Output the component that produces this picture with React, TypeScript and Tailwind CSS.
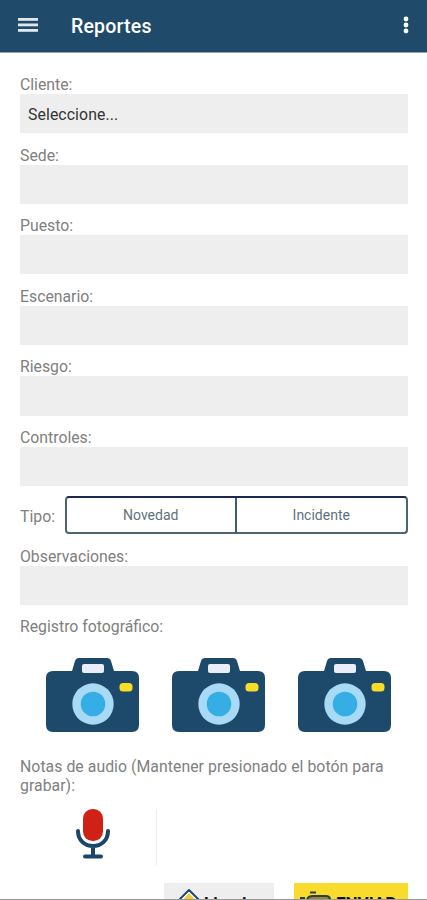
import React from "react";

const fields = [
    { label: "Cliente:", value: "Seleccione..." },
    { label: "Sede:", value: "" },
    { label: "Puesto:", value: "" },
    { label: "Escenario:", value: "" },
    { label: "Riesgo:", value: "" },
    { label: "Controles:", value: "" },
];

const Header = () => {
    return (
        <header className="flex h-[53px] items-center justify-between border-b border-[#8fa5b5] bg-[#204a69] pl-[18px] pr-[18px] text-white">
            <div className="flex items-center">
                <svg width="20" height="14" viewBox="0 0 20 14" fill="#dfe6ec" className="-mt-[2px]">
                    <rect width="20" height="2.8" />
                    <rect y="5.5" width="20" height="2.8" />
                    <rect y="11" width="20" height="2.8" />
                </svg>
                <h1 className="ml-[33px] pt-[2px] text-[19.5px] font-medium leading-6 tracking-[0.2px]">Reportes</h1>
            </div>
            <svg width="6" height="18" viewBox="0 0 6 18" fill="white" className="-mt-[2px]">
                <circle cx="3" cy="3" r="2.4" />
                <circle cx="3" cy="9" r="2.4" />
                <circle cx="3" cy="15" r="2.4" />
            </svg>
        </header>
    );
};

const Field = ({ label, value }: { label: string; value: string }) => {
    return (
        <div className="h-[70.6px]">
            <p className="h-[19px] leading-[19px]">{label}</p>
            <div className="h-[39.2px] bg-[#eee] px-2 text-[15.8px] leading-[41px] tracking-[0.1px] text-[#333]">{value}</div>
        </div>
    );
};

const Camera = () => {
    return (
        <svg width="94" height="76" viewBox="0 0 94 76">
            <path
                d="M7 13H26L29 3Q30 0 33 0H61Q64 0 65 3L68 13H86Q93 13 93 20V67Q93 74 86 74H7Q0 74 0 67V20Q0 13 7 13Z"
                fill="#1d496a"
            />
            <rect x="36" y="6" width="22" height="9" rx="2" fill="#e9edf5" />
            <circle cx="47" cy="46" r="20.7" fill="#a8daf5" />
            <circle cx="47" cy="46" r="12.3" fill="#35ade5" />
            <rect x="73.500" y="25" width="13" height="8.500" rx="3.500" fill="#f8dc25" />
        </svg>
    );
};

const Microphone = () => {
    return (
        <svg width="36" height="50" viewBox="0 0 36 50">
            <rect x="8" y="0" width="20" height="32" rx="9.500" fill="#cf2115" />
            <path d="M3 22C3 42 33 42 33 22M18 37V47M10 47.500H26" fill="none" stroke="#1b456a" strokeWidth="4" strokeLinecap="round" />
        </svg>
    );
};

const App = () => {
    return (
        <main className="flex h-[900px] w-[427px] flex-col overflow-hidden bg-white font-['Roboto',sans-serif] text-[15.8px] text-[#808080]">
            <Header />
            <div className="pl-5 pr-[19px] pt-[22px]">
                {fields.map((field) => (
                    <Field key={field.label} label={field.label} value={field.value} />
                ))}
                <div className="-mt-[2.200px] flex h-[38px] items-center">
                    <p className="w-[45px] shrink-0 pt-[2px]">Tipo:</p>
                    <div className="grid h-[38px] flex-1 grid-cols-2 rounded-[4px] border-2 border-[#4a6673] border-t-[#1d2852] text-center text-[14px] leading-[35px] text-[#60727c]">
                        <span className="border-r-2 border-[#3b5d70]">Novedad</span>
                        <span>Incidente</span>
                    </div>
                </div>
                <p className="mt-[12.400px] h-[19px] leading-[19px]">Observaciones:</p>
                <div className="h-[39px] bg-[#eee]" />
                <p className="mt-[12.400px] h-[19px] leading-[19px]">Registro fotográfico:</p>
                <div className="mt-[22px] flex gap-8 pl-[26px]">
                    <Camera />
                    <Camera />
                    <Camera />
                </div>
                <p className="mt-[24px] leading-[18.500px] tracking-[0.05px]">Notas de audio (Mantener presionado el botón para grabar):</p>
                <div className="mt-[14px] flex h-[56px] w-[137px] border-r border-[#ececec] pl-[55px]">
                    <Microphone />
                </div>
            </div>
            <div className="mt-auto flex h-[16px] shrink-0 gap-5 overflow-hidden pl-[164px]">
                <button className="flex h-10 w-[110px] items-start bg-[#eee] pl-[11px] pt-[5px] text-[17px] font-bold text-[#111]">
                    <svg width="28" height="28" viewBox="0 0 28 28">
                        <path d="M14 2L26 14L14 26L2 14Z" fill="#fff" stroke="#1d496a" strokeWidth="2" strokeLinejoin="round" />
                        <path d="M14 5L22 14L14 22L6 14Z" fill="#f4c936" />
                    </svg>
                    <span className="ml-px mt-[3px]">Limpiar</span>
                </button>
                <button className="flex h-10 w-[114px] items-start bg-[#f9db2d] pl-[6px] pt-[7px] text-[17px] font-bold text-[#111]">
                    <svg width="32" height="24" viewBox="0 0 32 24">
                        <path d="M7 14V11Q7 6 13 6H26Q30 6 30 10L27 22H9Z" fill="#958640" stroke="#26433f" strokeWidth="2" />
                        <path d="M10 2.500H16M0 8H5" stroke="#26433f" strokeWidth="2" />
                    </svg>
                    <span className="ml-[4px] mt-px">ENVIAR</span>
                </button>
            </div>
            <div className="h-px shrink-0 bg-[#999]" />
        </main>
    );
};

export default App;
